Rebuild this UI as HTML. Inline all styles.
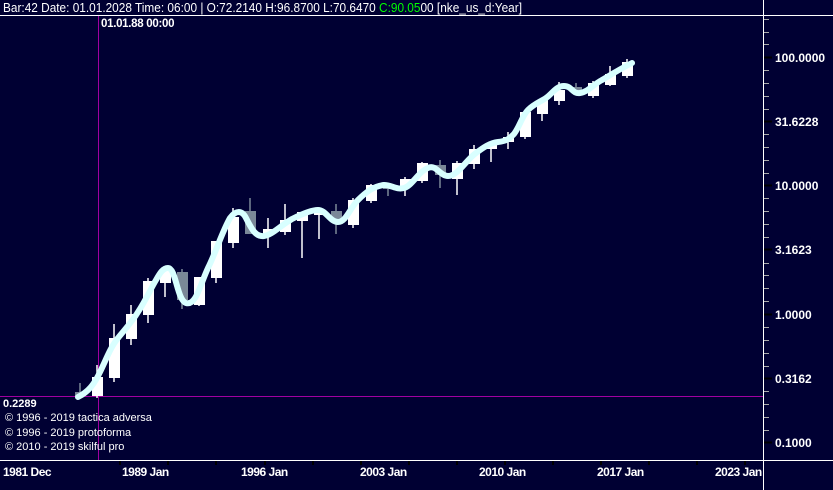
<!DOCTYPE html>
<html><head><meta charset="utf-8"><style>
html,body{margin:0;padding:0;background:#000033;}
body{width:833px;height:490px;overflow:hidden;position:relative;font-family:"Liberation Sans",sans-serif;}
svg{position:absolute;left:0;top:0;}
text{font-family:"Liberation Sans",sans-serif;fill:#fff;}
</style></head><body>
<svg width="833" height="490" viewBox="0 0 833 490" xmlns="http://www.w3.org/2000/svg">
<rect width="833" height="490" fill="#000033"/>
<line x1="0" y1="15.5" x2="833" y2="15.5" stroke="#fff" stroke-width="1"/>
<line x1="763.5" y1="0" x2="763.5" y2="490" stroke="#fff" stroke-width="1"/>
<line x1="0" y1="460.5" x2="833" y2="460.5" stroke="#fff" stroke-width="1"/>
<text x="3" y="12" font-size="12.5" textLength="519" lengthAdjust="spacingAndGlyphs">Bar:42 Date: 01.01.2028 Time: 06:00 | O:72.2140 H:96.8700 L:70.6470 <tspan fill="#00ff00">C:90.05</tspan>00 [nke_us_d:Year]</text>
<line x1="98.5" y1="16" x2="98.5" y2="460" stroke="#a000a0" stroke-width="1"/>
<line x1="0" y1="396.5" x2="763" y2="396.5" stroke="#a000a0" stroke-width="1"/>
<text x="101" y="27" font-size="11.5" font-weight="bold" letter-spacing="-0.3">01.01.88 00:00</text>
<text x="3" y="407" font-size="11" font-weight="bold">0.2289</text>
<text x="5" y="421" font-size="11">© 1996 - 2019 tactica adversa</text>
<text x="5" y="436" font-size="11">© 1996 - 2019 protoforma</text>
<text x="5" y="450" font-size="11">© 2010 - 2019 skilful pro</text>
<g stroke="#aaa" stroke-width="1">
<line x1="764" y1="19.5" x2="769" y2="19.5"/><line x1="764" y1="32.5" x2="769" y2="32.5"/><line x1="764" y1="44.5" x2="769" y2="44.5"/>
<line x1="764" y1="70.5" x2="769" y2="70.5"/><line x1="764" y1="83.5" x2="769" y2="83.5"/><line x1="764" y1="96.5" x2="769" y2="96.5"/><line x1="764" y1="109.5" x2="769" y2="109.5"/>
<line x1="764" y1="134.5" x2="769" y2="134.5"/><line x1="764" y1="147.5" x2="769" y2="147.5"/><line x1="764" y1="160.5" x2="769" y2="160.5"/><line x1="764" y1="173.5" x2="769" y2="173.5"/>
<line x1="764" y1="198.5" x2="769" y2="198.5"/><line x1="764" y1="211.5" x2="769" y2="211.5"/><line x1="764" y1="224.5" x2="769" y2="224.5"/><line x1="764" y1="237.5" x2="769" y2="237.5"/>
<line x1="764" y1="263.5" x2="769" y2="263.5"/><line x1="764" y1="275.5" x2="769" y2="275.5"/><line x1="764" y1="288.5" x2="769" y2="288.5"/><line x1="764" y1="301.5" x2="769" y2="301.5"/>
<line x1="764" y1="327.5" x2="769" y2="327.5"/><line x1="764" y1="340.5" x2="769" y2="340.5"/><line x1="764" y1="353.5" x2="769" y2="353.5"/><line x1="764" y1="366.5" x2="769" y2="366.5"/>
<line x1="764" y1="391.5" x2="769" y2="391.5"/><line x1="764" y1="404.5" x2="769" y2="404.5"/><line x1="764" y1="417.5" x2="769" y2="417.5"/><line x1="764" y1="430.5" x2="769" y2="430.5"/>
</g>
<g stroke="#000" stroke-width="2">
<line x1="764" y1="57.5" x2="772" y2="57.5"/><line x1="764" y1="121.5" x2="772" y2="121.5"/><line x1="764" y1="185.5" x2="772" y2="185.5"/><line x1="764" y1="249.5" x2="772" y2="249.5"/><line x1="764" y1="314.5" x2="772" y2="314.5"/><line x1="764" y1="378.5" x2="772" y2="378.5"/><line x1="764" y1="442.5" x2="772" y2="442.5"/>
</g>
<g font-size="12" font-weight="bold">
<text x="775" y="62">100.0000</text>
<text x="775" y="126">31.6228</text>
<text x="775" y="190">10.0000</text>
<text x="775" y="254">3.1623</text>
<text x="775" y="319">1.0000</text>
<text x="775" y="383">0.3162</text>
<text x="775" y="447">0.1000</text>
</g>
<g stroke="#000" stroke-width="2">
<line x1="120" y1="461" x2="120" y2="465"/><line x1="168" y1="461" x2="168" y2="465"/><line x1="216" y1="461" x2="216" y2="465"/><line x1="265" y1="461" x2="265" y2="465"/><line x1="313" y1="461" x2="313" y2="465"/><line x1="361" y1="461" x2="361" y2="465"/><line x1="409" y1="461" x2="409" y2="465"/><line x1="457" y1="461" x2="457" y2="465"/><line x1="505" y1="461" x2="505" y2="465"/><line x1="553" y1="461" x2="553" y2="465"/><line x1="601" y1="461" x2="601" y2="465"/><line x1="649" y1="461" x2="649" y2="465"/><line x1="697" y1="461" x2="697" y2="465"/><line x1="745" y1="461" x2="745" y2="465"/>
</g>
<g font-size="12" font-weight="bold" letter-spacing="-0.5">
<text x="3" y="476">1981 Dec</text>
<text x="122" y="476">1989 Jan</text>
<text x="241" y="476">1996 Jan</text>
<text x="360" y="476">2003 Jan</text>
<text x="479" y="476">2010 Jan</text>
<text x="597" y="476">2017 Jan</text>
<text x="715" y="476">2023 Jan</text>
</g>
<g stroke="#fff" stroke-width="1.5">
<line x1="80" y1="383" x2="80" y2="398" stroke="#7a8898"/>
<line x1="97" y1="365" x2="97" y2="398"/>
<line x1="114" y1="324" x2="114" y2="382"/>
<line x1="131" y1="305" x2="131" y2="345"/>
<line x1="148" y1="278" x2="148" y2="323"/>
<line x1="165" y1="268" x2="165" y2="297"/>
<line x1="182" y1="269" x2="182" y2="309" stroke="#7a8898"/>
<line x1="199" y1="277" x2="199" y2="306"/>
<line x1="216" y1="241" x2="216" y2="283"/>
<line x1="233" y1="208" x2="233" y2="248"/>
<line x1="250" y1="198" x2="250" y2="234" stroke="#7a8898"/>
<line x1="268" y1="218" x2="268" y2="248"/>
<line x1="285" y1="204" x2="285" y2="235"/>
<line x1="302" y1="212" x2="302" y2="258"/>
<line x1="319" y1="210" x2="319" y2="239"/>
<line x1="336" y1="204" x2="336" y2="234" stroke="#7a8898"/>
<line x1="353" y1="198" x2="353" y2="228"/>
<line x1="371" y1="184" x2="371" y2="203"/>
<line x1="388" y1="183" x2="388" y2="196" stroke="#7a8898"/>
<line x1="405" y1="177" x2="405" y2="196"/>
<line x1="422" y1="162" x2="422" y2="183"/>
<line x1="440" y1="160" x2="440" y2="188" stroke="#7a8898"/>
<line x1="457" y1="161" x2="457" y2="195"/>
<line x1="474" y1="145" x2="474" y2="169"/>
<line x1="491" y1="141" x2="491" y2="162"/>
<line x1="508" y1="132" x2="508" y2="149"/>
<line x1="525" y1="110" x2="525" y2="139"/>
<line x1="542" y1="98" x2="542" y2="121"/>
<line x1="559" y1="82" x2="559" y2="105"/>
<line x1="576" y1="83" x2="576" y2="95" stroke="#7a8898"/>
<line x1="593" y1="81" x2="593" y2="98"/>
<line x1="610" y1="66" x2="610" y2="86"/>
<line x1="627" y1="59" x2="627" y2="78"/>
</g>
<g fill="#fff">
<rect x="75" y="392" width="11" height="4" fill="#7a8898"/>
<rect x="92" y="377" width="11" height="19"/>
<rect x="109" y="338" width="11" height="40"/>
<rect x="126" y="314" width="11" height="25"/>
<rect x="143" y="281" width="11" height="34"/>
<rect x="160" y="270" width="11" height="13"/>
<rect x="177" y="272" width="11" height="28" fill="#7a8898"/>
<rect x="194" y="277" width="11" height="28"/>
<rect x="211" y="241" width="11" height="37"/>
<rect x="228" y="217" width="11" height="26"/>
<rect x="245" y="211" width="11" height="23" fill="#7a8898"/>
<rect x="263" y="229" width="11" height="6"/>
<rect x="280" y="220" width="11" height="12"/>
<rect x="297" y="212" width="11" height="9"/>
<rect x="314" y="212" width="11" height="3"/>
<rect x="331" y="211" width="11" height="11" fill="#7a8898"/>
<rect x="348" y="200" width="11" height="25"/>
<rect x="366" y="185" width="11" height="16"/>
<rect x="383" y="185" width="11" height="4" fill="#7a8898"/>
<rect x="400" y="179" width="11" height="8"/>
<rect x="417" y="163" width="11" height="18"/>
<rect x="435" y="165" width="11" height="10" fill="#7a8898"/>
<rect x="452" y="163" width="11" height="16"/>
<rect x="469" y="149" width="11" height="15"/>
<rect x="486" y="143" width="11" height="6"/>
<rect x="503" y="137" width="11" height="5"/>
<rect x="520" y="112" width="11" height="25"/>
<rect x="537" y="100" width="11" height="14"/>
<rect x="554" y="90" width="11" height="11"/>
<rect x="571" y="87" width="11" height="6" fill="#7a8898"/>
<rect x="588" y="83" width="11" height="13"/>
<rect x="605" y="74" width="11" height="11"/>
<rect x="622" y="62" width="11" height="14"/>
</g>
<path d="M78,397 C88,392 94,385 100,372 C106,360 110,348 118,338 C126,328 132,322 138,312 C146,300 150,290 156,280 C160,273 163,268 168,268 C176,268 177,300 186,303 C196,306 200,285 208,268 C216,252 222,232 230,218 C236,210 242,210 246,218 C252,230 256,237 264,236 C272,235 280,226 292,219 C304,213 312,210 318,210 C326,210 330,222 338,222 C346,222 350,208 358,200 C366,192 374,186 384,185 C392,185 396,190 404,188 C412,186 418,172 428,168 C436,164 440,176 448,176 C458,176 466,160 476,153 C484,147 490,143 498,142 C506,141 508,140 514,134 C520,126 522,116 528,110 C534,104 540,102 546,98 C552,94 556,86 564,86 C572,86 572,94 580,93 C588,92 594,84 602,80 C612,74 620,69 632,63" fill="none" stroke="#d8ffff" stroke-width="6" stroke-linecap="round"/>
</svg>
</body></html>
